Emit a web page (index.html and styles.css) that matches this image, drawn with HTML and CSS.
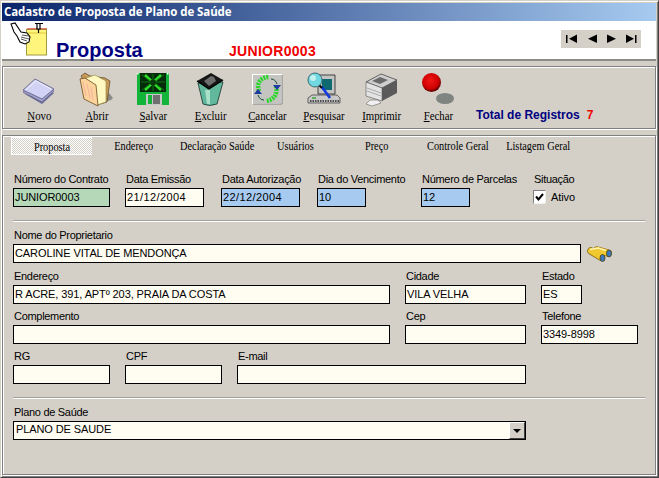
FILE: index.html
```html
<!DOCTYPE html>
<html lang="pt">
<head>
<meta charset="utf-8">
<title>Cadastro de Proposta de Plano de Saúde</title>
<link rel="stylesheet" href="styles.css">
</head>
<body>
<div class="window">
  <div class="titlebar">Cadastro de Proposta de Plano de Saúde</div>
  <header class="header">
    <svg class="note" viewBox="8 22 42 38" width="42" height="38">
      <rect x="26.500" y="30.500" width="20" height="25.500" fill="#fff57c" stroke="#a09a40"/>
      <path d="M27 29.800H47" stroke="#d84030" stroke-width="1"/>
      <path d="M28 34H46" stroke="#e0c840"/>
      <path d="M35 24.500h8M37 25v5h3v-5M38.500 30v4" fill="#fff" stroke="#000" stroke-width="1.200"/>
      <path d="M11 25l4-1 6 9 6 1 3 4-1 5-4 2-5-2-3-6-3-4z" fill="#fff" stroke="#000" stroke-width="1.100"/>
      <path d="M22 36l7 1M21 38l8 2M21 40l6 2" stroke="#555" stroke-width="1"/>
    </svg>
    <h1 class="brand">Proposta</h1>
    <div class="code">JUNIOR0003</div>
    <div class="nav">
      <svg viewBox="561 31 80 18" width="80" height="18">
        <path d="M566 36h1.500v8H566zM577 35.500v8.500l-8-4.200z" fill="#000"/>
        <path d="M597 35.500v8.500l-9-4.200z" fill="#000"/>
        <path d="M607 35.500v8.500l9-4.200z" fill="#000"/>
        <path d="M626 35.500v8.500l8-4.200zM635 36h1.500v8H635z" fill="#000"/>
      </svg>
    </div>
  </header>

  <section class="toolbar">
    <div class="tool">
      <svg viewBox="12 70 57 38" width="57" height="38">
        <path d="M24 93l19 11 12-11-5-3-7 9z" fill="#6e6e98"/>
        <path d="M24 92l19 10 12-11-19-9z" fill="#a5a5cf" stroke="#55557c" stroke-width=".6"/>
        <path d="M24 90l12-11 19 10-12 10z" fill="#d2d2f4" stroke="#55557c" stroke-width=".8"/>
        <path d="M27 90l10-9 15 8" fill="none" stroke="#f0f0ff"/>
      </svg>
      <span class="tool-label"><u>N</u>ovo</span>
    </div>
    <div class="tool">
      <svg viewBox="69 70 57 38" width="57" height="38">
        <path d="M95 105l17-5 2-2-4-5z" fill="#8a8a86"/>
        <path d="M82 76l4-3 5 3 15 2 5 3-3 21-10 3z" fill="#c79a5a" stroke="#5a4420" stroke-width=".7"/>
        <path d="M87 78l9-3 11 6 0 21-9 3z" fill="#fff8c0" stroke="#8c8040" stroke-width=".6"/>
        <path d="M81 79l5-1 11 7 2 21-14-7z" fill="#fcd39a" stroke="#6b4a20" stroke-width=".8"/>
        <path d="M84 82l3 14M88 84l3 14M92 87l2 13" stroke="#f4a8a0" stroke-width=".8"/>
      </svg>
      <span class="tool-label"><u>A</u>brir</span>
    </div>
    <div class="tool">
      <svg viewBox="126 70 57 38" width="57" height="38">
        <rect x="138" y="73" width="32" height="32" fill="#12b53a"/>
        <rect x="141" y="73" width="26" height="19" fill="#042c0a"/>
        <path d="M146 75l16 15M162 75l-16 15" stroke="#2fe02a" stroke-width="2.500"/>
        <path d="M142 82h24M154 74v17M143 75l22 15M165 75l-22 15" stroke="#0f8a12" stroke-width=".8"/>
        <circle cx="154" cy="82.500" r="3" fill="#0a3a0c"/>
        <rect x="147" y="94" width="16" height="11" fill="#c8c8c8"/>
        <rect x="149" y="95" width="4" height="9" fill="#12b53a"/>
        <rect x="154" y="95" width="7" height="9" fill="#707070"/>
        <rect x="138" y="73" width="1.500" height="1.500" fill="#fff"/>
        <rect x="168" y="73" width="1.500" height="1.500" fill="#fff"/>
      </svg>
      <span class="tool-label"><u>S</u>alvar</span>
    </div>
    <div class="tool">
      <svg viewBox="183 70 57 38" width="57" height="38">
        <path d="M199 83l5 21q6 3 14 0l6-22z" fill="#62b89c" stroke="#14302a" stroke-width=".8"/>
        <path d="M206 90l2 14h3l0-14z" fill="#a8e0c8"/>
        <path d="M198 81l14-8 12 7-14 9z" fill="#161616"/>
        <path d="M205 81l7-5 3 1 2 4-7 5z" fill="#6e6e6e"/>
        <path d="M198 81l12 8 14-9" fill="none" stroke="#000" stroke-width="1.400"/>
      </svg>
      <span class="tool-label"><u>E</u>xcluir</span>
    </div>
    <div class="tool">
      <svg viewBox="240 70 57 38" width="57" height="38">
        <rect x="253.500" y="74.500" width="29" height="29" fill="#c4c4c0" stroke="#fff"/>
        <path d="M283 75v29H254" fill="none" stroke="#808080"/>
        <path d="M260 91c-3-8 2-14 10-14" fill="none" stroke="#2bd62b" stroke-width="4.500" stroke-dasharray="2 1"/>
        <path d="M277 86c2 8-2 14-10 15" fill="none" stroke="#2bd62b" stroke-width="4.500" stroke-dasharray="2 1"/>
        <path d="M272 79c3 0 5 2 6 5" fill="none" stroke="#1a5040" stroke-width="1"/>
        <path d="M274 85h8l-4 5z" fill="#1a3aa0"/>
        <path d="M265 100c-3 0-5-2-6-5" fill="none" stroke="#1a5040" stroke-width="1"/>
        <path d="M255 94h8l-4-5z" fill="#1a3aa0"/>
      </svg>
      <span class="tool-label"><u>C</u>ancelar</span>
    </div>
    <div class="tool">
      <svg viewBox="297 70 57 38" width="57" height="38">
        <path d="M319 75h17v19h-17z" fill="#c4c4c4" stroke="#222" stroke-width=".8"/>
        <rect x="323" y="79" width="10" height="11" fill="#0e6a70"/>
        <path d="M313 95h25l3 3v5h-32v-5z" fill="#c8c8c8" stroke="#333" stroke-width=".7"/>
        <path d="M311 101h29" stroke="#222" stroke-width="1.500" stroke-dasharray="1.500 1"/>
        <path d="M313 98h4" stroke="#18a018" stroke-width="1.200"/>
        <path d="M323 87l8 11" stroke="#1438e0" stroke-width="2.600"/>
        <path d="M320 85l3 3" stroke="#000" stroke-width="2"/>
        <circle cx="316" cy="80" r="7" fill="#6fd8e0" stroke="#3c6a70"/>
        <circle cx="314" cy="78" r="3" fill="#c4f0f0"/>
      </svg>
      <span class="tool-label"><u>P</u>esquisar</span>
    </div>
    <div class="tool">
      <svg viewBox="354 70 57 38" width="57" height="38">
        <path d="M371 100h8l3 3-9 3-6-2z" fill="#f0f0f0" stroke="#666" stroke-width=".6"/>
        <path d="M367 82l15-8 16 6-15 8z" fill="#cfcfcf" stroke="#333" stroke-width=".7"/>
        <path d="M373 81l8-4 8 3-8 4z" fill="#6a6a6a"/>
        <path d="M367 82l16 6v13l-16-5z" fill="#e4e4e4" stroke="#555" stroke-width=".6"/>
        <path d="M383 88l15-8v13l-15 8z" fill="#5a5a5a"/>
        <path d="M368 88l14 5M368 91l14 5" stroke="#999" stroke-width=".8"/>
      </svg>
      <span class="tool-label"><u>I</u>mprimir</span>
    </div>
    <div class="tool">
      <svg viewBox="411 70 57 38" width="57" height="38">
        <defs>
          <radialGradient id="ball" cx=".45" cy=".4" r=".6">
            <stop offset="0" stop-color="#f01818"/>
            <stop offset=".7" stop-color="#d00000"/>
            <stop offset="1" stop-color="#580000"/>
          </radialGradient>
        </defs>
        <ellipse cx="446" cy="98.500" rx="9" ry="5.500" fill="#7f8480"/>
        <circle cx="432.500" cy="82.500" r="9.500" fill="url(#ball)"/>
      </svg>
      <span class="tool-label"><u>F</u>echar</span>
    </div>
    <div class="total">Total de Registros<span class="total-num">7</span></div>
  </section>

  <section class="panel">
    <nav class="tabs">
      <div class="tab active"><span>Proposta</span></div>
      <div class="tab"><span>Endereço</span></div>
      <div class="tab"><span>Declaração Saúde</span></div>
      <div class="tab"><span>Usuários</span></div>
      <div class="tab"><span>Preço</span></div>
      <div class="tab"><span>Controle Geral</span></div>
      <div class="tab"><span>Listagem Geral</span></div>
    </nav>
    <div class="form">
      <div class="row row-first">
        <div class="field w97"><label>Número do Contrato</label><div class="input green">JUNIOR0003</div></div>
        <div class="field w79 gap15"><label>Data Emissão</label><div class="input date">21/12/2004</div></div>
        <div class="field w79 gap17"><label>Data Autorização</label><div class="input blue date">22/12/2004</div></div>
        <div class="field w49 gap17"><label>Dia do Vencimento</label><div class="input blue">10</div></div>
        <div class="field w49 gap55"><label>Número de Parcelas</label><div class="input blue">12</div></div>
        <div class="field gap63"><label>Situação</label>
          <div class="check">
            <svg class="checkbox" viewBox="0 0 13 14" width="13" height="14">
              <rect x=".5" y=".5" width="12" height="13" fill="#fff" stroke="#808080"/>
              <path d="M.5 13.500h12v-13" fill="none" stroke="#f0f0f0"/>
              <path d="M3 6.500l2.500 3 4.500-5.500" fill="none" stroke="#000" stroke-width="2"/>
            </svg>
            <span>Ativo</span>
          </div>
        </div>
      </div>
      <div class="divider"></div>
      <div class="row">
        <div class="field w568"><label>Nome do Proprietario</label><div class="input">CAROLINE VITAL DE MENDONÇA</div></div>
        <svg class="binoculars" viewBox="587 246 26 18" width="26" height="18">
          <path d="M591 251l10 6" stroke="#8a6a10" stroke-width="7.500" stroke-linecap="round"/>
          <path d="M597 250l11 3" stroke="#8a6a10" stroke-width="7.500" stroke-linecap="round"/>
          <path d="M591 251l10 6" stroke="#f0c830" stroke-width="6" stroke-linecap="round"/>
          <path d="M597 250l11 3" stroke="#f0c830" stroke-width="6" stroke-linecap="round"/>
          <path d="M590 249.500l8-1.500 8 2.500" fill="none" stroke="#fff4b0" stroke-width="1.500"/>
          <ellipse cx="602.500" cy="258" rx="2.500" ry="3.500" fill="#3a78c0" stroke="#504000" stroke-width=".8"/>
          <ellipse cx="609" cy="253.500" rx="2.500" ry="3.500" fill="#3a78c0" stroke="#504000" stroke-width=".8"/>
        </svg>
      </div>
      <div class="row row-next">
        <div class="field w377"><label>Endereço</label><div class="input">R ACRE, 391, APTº 203, PRAIA DA COSTA</div></div>
        <div class="field w121 gap15"><label>Cidade</label><div class="input">VILA VELHA</div></div>
        <div class="field w41 gap15"><label>Estado</label><div class="input">ES</div></div>
      </div>
      <div class="row row-next">
        <div class="field w377"><label>Complemento</label><div class="input"></div></div>
        <div class="field w121 gap15"><label>Cep</label><div class="input"></div></div>
        <div class="field w97 gap15"><label>Telefone</label><div class="input">3349-8998</div></div>
      </div>
      <div class="row row-next">
        <div class="field w97"><label>RG</label><div class="input"></div></div>
        <div class="field w97 gap15"><label>CPF</label><div class="input"></div></div>
        <div class="field w289 gap15"><label>E-mail</label><div class="input"></div></div>
      </div>
      <div class="divider"></div>
      <div class="row">
        <div class="field w513"><label>Plano de Saúde</label>
          <div class="input combo"><span class="combo-text">PLANO DE SAUDE</span><span class="combo-btn"><i class="combo-arrow"></i></span></div>
        </div>
      </div>
    </div>
  </section>
</div>
</body>
</html>
```
FILE: styles.css
```css
* { box-sizing: border-box; }
html, body { margin: 0; padding: 0; }
body {
  width: 659px;
  height: 478px;
  overflow: hidden;
  background: #d4d0c8;
  font-family: "Liberation Sans", Arial, sans-serif;
  font-size: 11px;
  color: #000;
}
.window {
  width: 659px;
  height: 478px;
  padding: 2px 2px 2px 1px;
  border: 1px solid;
  border-color: #d4d0c8 #404040 #404040 #d4d0c8;
  box-shadow: inset 1px 1px 0 #fff, inset -1px -1px 0 #808080;
  display: flex;
  flex-direction: column;
}
.titlebar {
  height: 18px;
  padding-left: 2px;
  line-height: 18px;
  color: #fff;
  font-family: "Open Sans", sans-serif;
  font-weight: bold;
  font-size: 11.500px;
  letter-spacing: -.08px;
  white-space: nowrap;
  background: linear-gradient(90deg, #0a246a, #a6caf0);
  flex: none;
}
.header {
  height: 40px;
  flex: none;
  background: #fff;
  border-bottom: 2px solid #8c8c88;
  display: flex;
  align-items: flex-start;
}
.note { margin-left: 6px; flex: none; }
.brand {
  margin: 16px 0 0 6px;
  width: 173px;
  font-family: "Liberation Sans", sans-serif;
  font-weight: bold;
  font-size: 20px;
  line-height: 26px;
  color: #000080;
}
.code {
  margin-top: 21px;
  width: 332px;
  color: #f00000;
  font-weight: bold;
  font-size: 14px;
  line-height: 18px;
  letter-spacing: .3px;
}
.nav {
  margin-top: 9px;
  width: 80px;
  height: 18px;
  background: #d4d0c8;
  flex: none;
}
.nav svg { display: block; }
.toolbar {
  height: 63px;
  margin-top: 5px;
  flex: none;
  border: 1px solid #808080;
  box-shadow: inset 1px 1px 0 #fff, 1px 1px 0 #fff;
  padding: 3px 0 0 8px;
  display: flex;
}
.tool {
  width: 57px;
  flex: none;
  display: flex;
  flex-direction: column;
  align-items: center;
}
.tool svg { display: block; flex: none; }
.tool-label {
  font-family: "Liberation Serif", serif;
  font-size: 12px;
  line-height: 14px;
  margin-top: 1px;
  white-space: nowrap;
  transform: scaleX(.9);
}
.total {
  margin: 37px 0 0 9px;
  color: #000080;
  font-weight: bold;
  font-size: 12px;
  line-height: 16px;
  display: flex;
}
.total-num { color: #f00000; margin-left: 7px; }
.panel {
  flex: 1;
  margin-top: 6px;
  border: 1px solid #808080;
  box-shadow: inset 1px 1px 0 #fff, 1px 1px 0 #fff;
  padding: 1px 0 0 2px;
}
.tabs {
  display: flex;
  height: 18px;
  padding-left: 7px;
}
.tab {
  width: 81px;
  flex: none;
  text-align: center;
  font-family: "Liberation Serif", serif;
  font-size: 12px;
  line-height: 18px;
  white-space: nowrap;
}
.tab span { display: inline-block; transform: scaleX(.86); }
.tab.active {
  margin-left: -1px;
  margin-right: 1px;
  background-image: repeating-conic-gradient(#fff 0 25%, #d4d0c8 0 50%);
  background-size: 2px 2px;
  border-top: 1px solid #fff;
  border-left: 1px solid #fff;
  border-bottom: 1px solid #fff;
  line-height: 19px;
}
.form { padding: 0 10px 0 8px; }
.row { display: flex; }
.row-first { margin-top: 17px; }
.row-next { margin-top: 5px; }
.field { flex: none; display: flex; flex-direction: column; }
.field label {
  display: block;
  height: 16px;
  line-height: 15px;
  padding-left: 1px;
  white-space: nowrap;
  letter-spacing: -.3px;
}
.input {
  height: 19px;
  border: 1px solid #000;
  background: #fffcf2;
  padding-left: 1px;
  line-height: 16px;
  white-space: pre;
  overflow: hidden;
  letter-spacing: -.1px;
}
.date { letter-spacing: .4px; }
.green { background: #b4d8b8; }
.blue { background: #a6caf0; }
.w41 { width: 41px; }
.w49 { width: 49px; }
.w79 { width: 79px; }
.w97 { width: 97px; }
.w121 { width: 121px; }
.w289 { width: 289px; }
.w377 { width: 377px; }
.w513 { width: 513px; }
.w568 { width: 568px; }
.gap15 { margin-left: 15px; }
.gap17 { margin-left: 17px; }
.gap55 { margin-left: 55px; }
.gap63 { margin-left: 63px; }
.check { display: flex; align-items: center; height: 15px; margin-top: 1px; }
.checkbox { display: block; flex: none; }
.check span { margin-left: 5px; letter-spacing: -.1px; }
.divider {
  height: 2px;
  margin: 13px 0 6px;
  border-top: 1px solid #a0a09c;
  border-bottom: 1px solid #fff;
}
.binoculars { margin: 18px 0 0 6px; flex: none; }
.combo { display: flex; justify-content: space-between; align-items: flex-start; }
.combo-text { padding-left: 1px; line-height: 15px; }
.combo-btn {
  width: 16px;
  height: 17px;
  flex: none;
  background: #d4d0c8;
  border: 1px solid;
  border-color: #fff #404040 #404040 #fff;
  display: flex;
  align-items: center;
  justify-content: center;
}
.combo-arrow {
  width: 0;
  height: 0;
  border-left: 4px solid transparent;
  border-right: 4px solid transparent;
  border-top: 4px solid #000;
}
```
